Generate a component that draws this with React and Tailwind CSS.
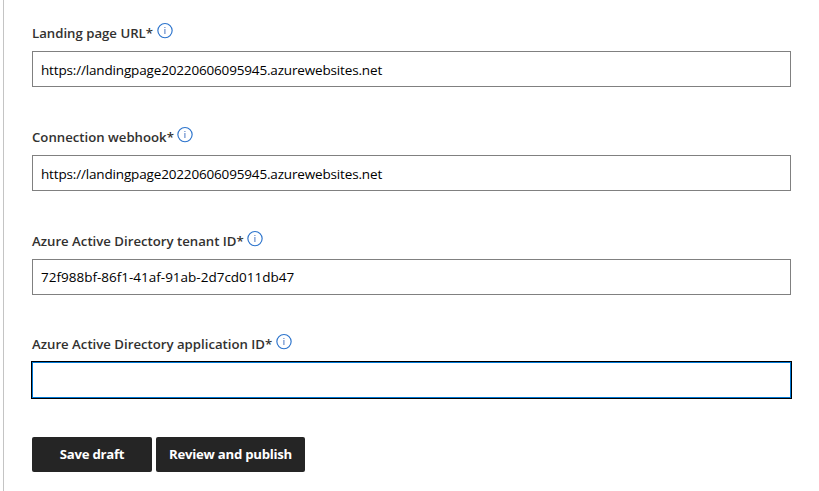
import React from "react";

function InfoIcon() {
  return (
    <svg className="h-4 w-4 shrink-0 overflow-visible" viewBox="0 0 16 16" fill="none">
      <circle cx="8" cy="7.6" r="7.15" stroke="#2b73cc" strokeWidth="1.15" />
      <path d="M7.9 6V11" stroke="#5b83c8" strokeWidth="1.1" />
      <path d="M7.9 4V5" stroke="#5b83c8" strokeWidth="1.1" />
    </svg>
  );
}

function Field({ label, value, labelClass, valueClass, gap, focused }) {
  return (
    <div className={gap}>
      <div className="flex h-7 items-start">
        <label className={`shrink-0 text-[13.2px] leading-5 font-semibold whitespace-nowrap text-[#323130] ${labelClass}`}>
          {label}
        </label>
        <InfoIcon />
      </div>
      <div
        className={`flex h-9 w-[759px] items-center border pl-2 text-[13.5px] text-black ${
          focused ? "border-[#0078d4] outline outline-1 outline-black" : "border-[#808080]"
        }`}
      >
        <span className={`whitespace-nowrap ${valueClass}`}>{value}</span>
      </div>
    </div>
  );
}

export default function App() {
  return (
    <div className="h-[491px] w-[819px] overflow-hidden bg-white pl-[3px] font-['Open_Sans','Noto_Sans',sans-serif]">
      <main className="h-full border-l border-[#c4c4c4] pt-[23px] pl-7">
        <Field label="Landing page URL*" value="https://landingpage20220606095945.azurewebsites.net" labelClass="w-[125px]" valueClass="pt-0.5 tracking-[-0.16px]" gap="mb-10" />
        <Field label="Connection webhook*" value="https://landingpage20220606095945.azurewebsites.net" labelClass="w-[145px]" valueClass="pt-0.5 tracking-[-0.16px]" gap="mb-10" />
        <Field label="Azure Active Directory tenant ID*" value="72f988bf-86f1-41af-91ab-2d7cd011db47" labelClass="w-[215px]" valueClass="" gap="mb-[39px]" />
        <Field label="Azure Active Directory application ID*" value="" labelClass="w-[244px]" valueClass="" gap="mb-[39px]" focused />
        <div className="flex gap-1 text-[13.2px] font-bold tracking-[-0.25px] text-white">
          <button className="h-[35px] w-[120px] rounded-[2px] bg-[#252525] whitespace-nowrap">Save draft</button>
          <button className="h-[35px] w-[149px] rounded-[2px] bg-[#252525] whitespace-nowrap">Review and publish</button>
        </div>
      </main>
    </div>
  );
}
